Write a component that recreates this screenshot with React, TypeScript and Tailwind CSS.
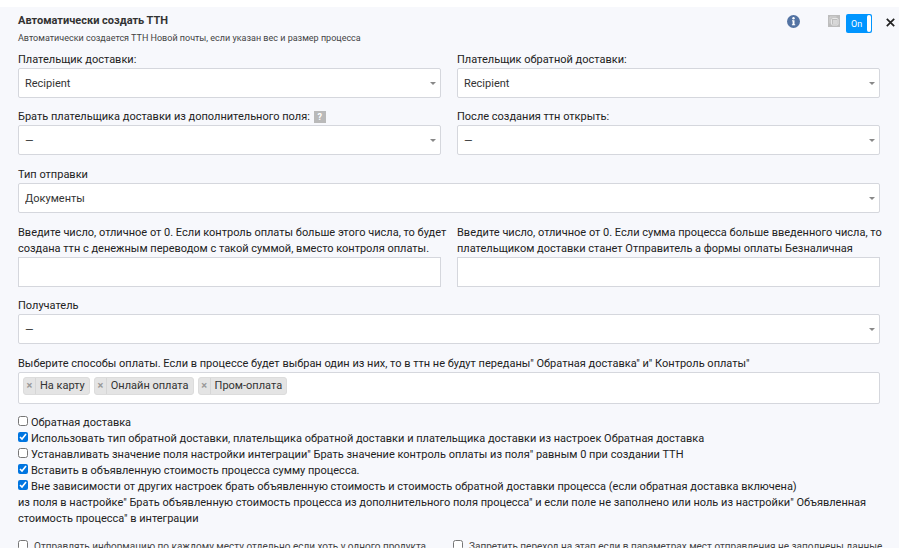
import React, { useState } from 'react';

interface FieldProps {
  id: string;
  label: React.ReactNode;
  hint?: boolean;
  wide?: boolean;
  children: React.ReactNode;
}

const Field: React.FC<FieldProps> = ({ id, label, hint, wide, children }) => (
  <div className={wide ? 'col-span-2' : ''}>
    <div className="flex items-center gap-1">
      <label htmlFor={id} className="whitespace-nowrap">{label}</label>
      {hint && (
        <button
          type="button"
          title="Подсказка"
          className="w-3 h-3 bg-[#b9b9b9] text-white text-[9px] leading-3 font-bold text-center"
        >
          ?
        </button>
      )}
    </div>
    {children}
  </div>
);

const Select: React.FC<{ id: string; options: string[] }> = ({ id, options }) => (
  <div className="relative">
    <select
      id={id}
      className="block w-full h-[30px] appearance-none rounded-xs border border-[#d5d7dd] bg-white pl-1.5 pr-5 pt-0.5 text-[#333]"
    >
      {options.map((option) => (
        <option key={option}>{option}</option>
      ))}
    </select>
    <span className="pointer-events-none absolute right-[5px] top-[14px] border-x-3 border-t-3 border-x-transparent border-t-[#888]" />
  </div>
);

const TextInput: React.FC<{ id: string }> = ({ id }) => (
  <input
    id={id}
    type="text"
    className="block w-full h-[30px] border border-[#d5d7dd] bg-white px-1.5 text-[#333]"
  />
);

interface CheckProps {
  id: string;
  checked?: boolean;
  className?: string;
  children: React.ReactNode;
}

const Check: React.FC<CheckProps> = ({ id, checked, className, children }) => (
  <div>
    <input
      id={id}
      type="checkbox"
      defaultChecked={checked}
      className={`w-[10px] h-[10px] align-baseline accent-[#0075e0] ${className ?? 'mr-[3px]'}`}
    />
    <label htmlFor={id}>{children}</label>
  </div>
);

const Header: React.FC = () => {
  const [enabled, setEnabled] = useState(true);

  return (
    <div className="flex items-start justify-between pl-[18px] pr-1 pt-[6px]">
      <div>
        <h1 className="text-[11px] leading-4 font-bold text-[#333]">Автоматически создать ТТН</h1>
        <p className="mt-px text-[9px] leading-4 text-[#444]">
          Автоматически создается ТТН Новой почты, если указан вес и размер процесса
        </p>
      </div>
      <div className="flex items-start pt-px">
        <button type="button" title="Информация" className="mr-[28px] mt-px">
          <svg width="13" height="13" viewBox="0 0 13 13">
            <circle cx="6.5" cy="6.5" r="6.5" fill="#5373a3" />
            <circle cx="6.5" cy="3.3" r="1.2" fill="#fff" />
            <path d="M5 5.2h2.5v4.1h.7v1H4.9v-1h.7V6.2H5z" fill="#fff" />
          </svg>
        </button>
        <button type="button" title="Копировать" className="mr-[6px] mt-px">
          <svg width="12" height="12" viewBox="0 0 12 12">
            <rect width="12" height="12" fill="#bdbdbd" />
            <path d="M2 8.5V2h6.5" fill="none" stroke="#d6d6d6" />
            <rect x="3.5" y="3.5" width="6.5" height="6.5" rx="1" fill="#bdbdbd" stroke="#e8e8e8" />
            <rect x="5" y="5" width="4" height="4" fill="#d8d8d8" />
          </svg>
        </button>
        <button
          type="button"
          role="switch"
          aria-checked={enabled}
          onClick={() => setEnabled(!enabled)}
          className="mr-[14px] flex h-[19px] w-[26px] items-center justify-between rounded-xs bg-[#0095ff] p-px text-[9px] text-white"
        >
          <span className="pl-1">{enabled ? 'On' : 'Off'}</span>
          <span className="h-full w-1 rounded-xs bg-white" />
        </button>
        <button type="button" title="Закрыть" className="mt-1">
          <svg width="9" height="9" viewBox="0 0 9 9">
            <path d="M.8.8l7.4 7.4M8.2.8L.8 8.2" stroke="#222" strokeWidth="1.7" />
          </svg>
        </button>
      </div>
    </div>
  );
};

const PaymentTags: React.FC = () => {
  const [tags, setTags] = useState(['На карту', 'Онлайн оплата', 'Пром-оплата']);

  return (
    <div className="flex h-8 gap-1 rounded-xs border border-[#d5d7dd] bg-white px-1 pt-1">
      {tags.map((tag) => (
        <span
          key={tag}
          className="flex h-[18px] items-center rounded-[3px] border border-[#dcdcdc] bg-[#e4e4e4] text-[#333]"
        >
          <button
            type="button"
            title="Удалить"
            onClick={() => setTags(tags.filter((t) => t !== tag))}
            className="h-full w-3 border-r border-[#d6d6d6] text-[11px] leading-4 font-bold text-[#999]"
          >
            ×
          </button>
          <span className="px-1">{tag}</span>
        </span>
      ))}
      <input id="payments" type="text" className="min-w-0 flex-1 outline-none h-[18px]" />
    </div>
  );
};

export default function App() {
  return (
    <div className="min-h-screen bg-[#f7f8fc] border-t-[7px] border-white font-[Roboto,sans-serif] text-[11px] leading-4 text-[#222]">
      <Header />

      <form className="pl-[18px] pr-[19px] pt-[6px]">
        <div className="grid grid-cols-2 gap-x-4 gap-y-[11px]">
          <Field id="payer" label="Плательщик доставки:">
            <Select id="payer" options={['Recipient', 'Sender']} />
          </Field>
          <Field id="backPayer" label="Плательщик обратной доставки:">
            <Select id="backPayer" options={['Recipient', 'Sender']} />
          </Field>
          <Field id="payerField" label="Брать плательщика доставки из дополнительного поля:" hint>
            <Select id="payerField" options={['—']} />
          </Field>
          <Field id="afterCreate" label="После создания ттн открыть:">
            <Select id="afterCreate" options={['—']} />
          </Field>
        </div>

        <div className="mt-3">
          <Field id="sendType" label="Тип отправки">
            <Select id="sendType" options={['Документы']} />
          </Field>
        </div>

        <div className="mt-3 grid grid-cols-2 gap-x-4 gap-y-[11px]">
          <Field
            id="controlSum"
            label={
              <>
                Введите число, отличное от 0. Если контроль оплаты больше этого числа, то будет
                <br />
                создана ттн с денежным переводом с такой суммой, вместо контроля оплаты.
              </>
            }
          >
            <TextInput id="controlSum" />
          </Field>
          <Field
            id="processSum"
            label={
              <>
                Введите число, отличное от 0. Если сумма процесса больше введенного числа, то
                <br />
                плательщиком доставки станет Отправитель а формы оплаты Безналичная
              </>
            }
          >
            <TextInput id="processSum" />
          </Field>
          <Field id="recipient" label="Получатель" wide>
            <Select id="recipient" options={['—']} />
          </Field>
        </div>

        <div className="mt-3">
          <Field
            id="payments"
            label={'Выберите способы оплаты. Если в процессе будет выбран один из них, то в ттн не будут переданы" Обратная доставка" и" Контроль оплаты"'}
          >
            <PaymentTags />
          </Field>
        </div>

        {/* Options */}
        <div className="mt-[11px]">
          <Check id="backDelivery">Обратная доставка</Check>
          <Check id="useBackType" checked>
            Использовать тип обратной доставки, плательщика обратной доставки и плательщика доставки из настроек Обратная доставка
          </Check>
          <Check id="zeroControl">
            Устанавливать значение поля настройки интеграции" Брать значение контроль оплаты из поля" равным 0 при создании ТТН
          </Check>
          <Check id="insertSum" checked>Вставить в объявленную стоимость процесса сумму процесса.</Check>
          <Check id="independent" checked>
            Вне зависимости от других настроек брать объявленную стоимость и стоимость обратной доставки процесса (если обратная доставка включена)
            <br />
            из поля в настройке" Брать объявленную стоимость процесса из дополнительного поля процесса" и если поле не заполнено или ноль из настройки" Объявленная
            <br />
            стоимость процесса" в интеграции
          </Check>
        </div>

        <div className="mt-3 grid grid-cols-2 gap-x-2 whitespace-nowrap text-[10px] text-[#444]">
          <Check id="perPlace" className="mr-[6px]">
            Отправлять информацию по каждому месту отдельно если хоть у одного продукта
          </Check>
          <Check id="forbidStage" className="mr-[6px]">
            Запретить переход на этап если в параметрах мест отправления не заполнены данные
          </Check>
        </div>
      </form>
    </div>
  );
}
